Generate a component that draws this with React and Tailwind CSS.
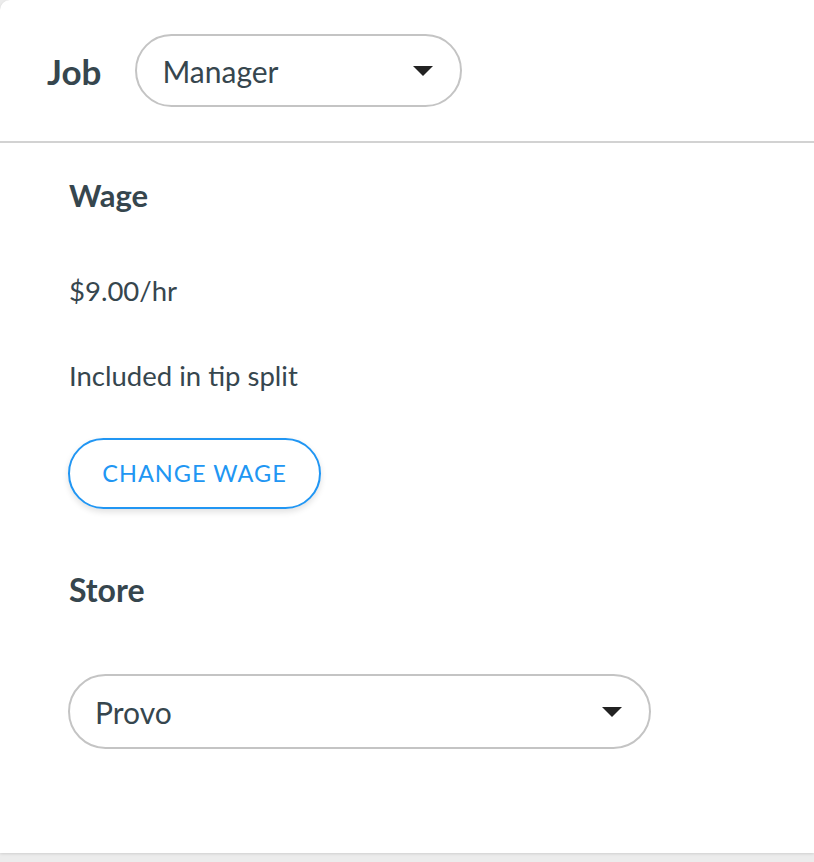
import React from "react";

function Caret() {
  return (
    <svg width="20" height="10" viewBox="0 0 20 10" className="shrink-0">
      <path d="M0 0 L20 0 L10 10 Z" fill="#222" />
    </svg>
  );
}

export default function App() {
  return (
    <div className="w-[814px] h-[862px] bg-[#ececec]" style={{ fontFamily: "Lato, 'Noto Sans', sans-serif" }}>
      <div className="h-[853px] bg-white rounded-tl-[10px] shadow-[0_1px_3px_rgba(0,0,0,0.12)] text-[#36464e] flex flex-col">
        <div className="h-[141px] flex items-center pl-[47px] gap-[34px] border-b-2 border-[#d2d2d2] box-content">
          <span className="text-[35px] font-bold leading-[40px]">Job</span>
          <div className="w-[327px] h-[73px] border-2 border-[#c4c4c4] rounded-full flex items-center justify-between pl-[25px] pr-[27px]">
            <span className="text-[30px] leading-[36px]">Manager</span>
            <Caret />
          </div>
        </div>
        <div className="pl-[69px] flex flex-col items-start">
          <div className="mt-[34px] text-[31px] font-bold leading-[36px]">Wage</div>
          <div className="mt-[63px] text-[27.5px] leading-[30px]">$9.00/hr</div>
          <div className="mt-[55px] text-[27.5px] leading-[30px]">Included in tip split</div>
          <button className="mt-[47px] -ml-px w-[253px] h-[71px] border-2 border-[#2196f3] rounded-full text-[#2196f3] text-[23.5px] tracking-[1px] shadow-[0_3px_6px_rgba(0,0,0,0.12)] flex items-center justify-center">
            CHANGE WAGE
          </button>
          <div className="mt-[63px] text-[32px] font-bold leading-[36px]">Store</div>
          <div className="mt-[66px] -ml-px w-[583px] h-[75px] border-2 border-[#c4c4c4] rounded-full flex items-center justify-between pl-[25px] pr-[27px]">
            <span className="text-[30px] leading-[36px]">Provo</span>
            <Caret />
          </div>
        </div>
      </div>
    </div>
  );
}
